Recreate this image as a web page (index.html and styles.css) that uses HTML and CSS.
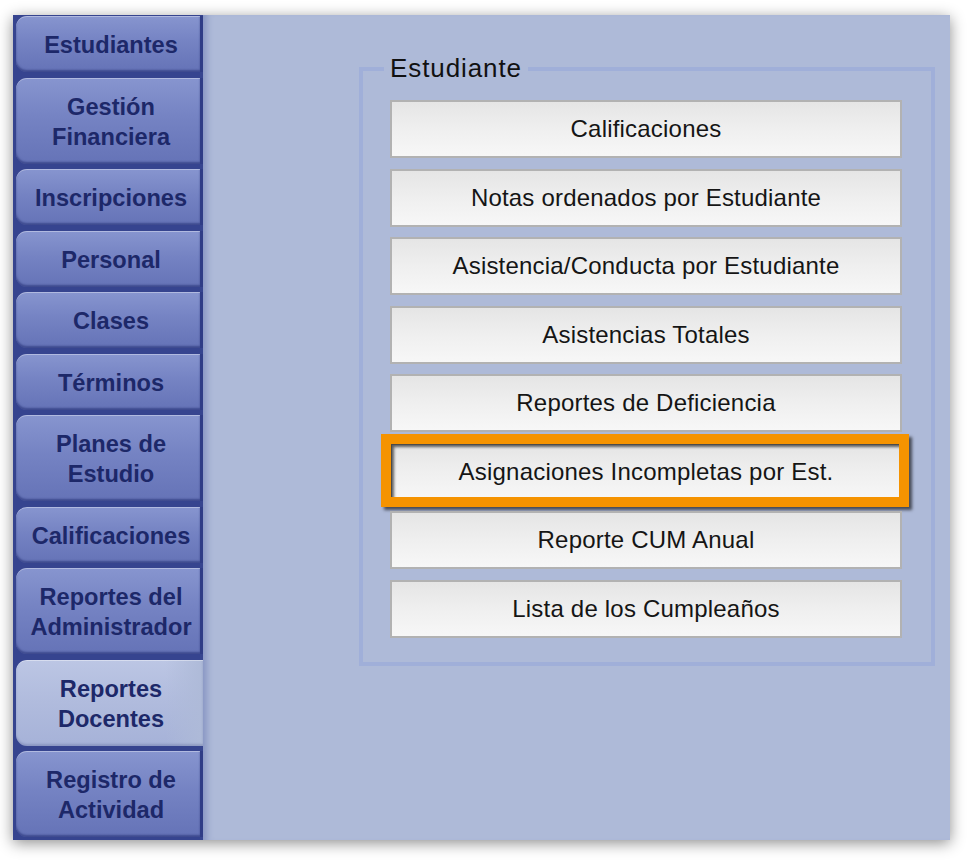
FILE: index.html
```html
<!DOCTYPE html>
<html lang="es">
<head>
<meta charset="utf-8">
<title>Reportes Docentes</title>
<link rel="stylesheet" href="styles.css">
</head>
<body>
<div class="frame">
  <nav class="sidebar">
    <div class="tab">Estudiantes</div>
    <div class="tab tall">Gestión<br>Financiera</div>
    <div class="tab">Inscripciones</div>
    <div class="tab">Personal</div>
    <div class="tab">Clases</div>
    <div class="tab">Términos</div>
    <div class="tab tall">Planes de<br>Estudio</div>
    <div class="tab">Calificaciones</div>
    <div class="tab tall">Reportes del<br>Administrador</div>
    <div class="tab tall selected">Reportes<br>Docentes</div>
    <div class="tab tall">Registro de<br>Actividad</div>
  </nav>
  <main class="content">
    <fieldset class="group">
      <legend class="group-title">Estudiante</legend>
      <div class="btn">Calificaciones</div>
      <div class="btn">Notas ordenados por Estudiante</div>
      <div class="btn">Asistencia/Conducta por Estudiante</div>
      <div class="btn">Asistencias Totales</div>
      <div class="btn">Reportes de Deficiencia</div>
      <div class="btn highlighted">Asignaciones Incompletas por Est.</div>
      <div class="btn">Reporte CUM Anual</div>
      <div class="btn">Lista de los Cumpleaños</div>
    </fieldset>
  </main>
</div>
</body>
</html>
```

FILE: styles.css
```css
html, body {
  margin: 0;
  padding: 0;
  background: #ffffff;
}

body {
  font-family: "Liberation Sans", Arial, sans-serif;
  width: 967px;
  height: 860px;
  overflow: hidden;
}

.frame {
  margin: 15px 0 0 13px;
  width: 937px;
  height: 825px;
  display: flex;
  box-shadow: 0 3px 14px rgba(0, 0, 0, 0.45);
}

.sidebar {
  width: 190px;
  flex: none;
  box-sizing: border-box;
  padding: 1px 0 0 3px;
  background: #36448f;
  display: flex;
  flex-direction: column;
  gap: 5.5px;
}

.tab {
  height: 56px;
  box-sizing: border-box;
  border-radius: 11px 0 0 11px;
  border-right: 3px solid #2f3c86;
  padding: 2px 0 0 6px;
  background: linear-gradient(#8795cf 0%, #7583c3 45%, #6573b7 100%);
  box-shadow: inset 0 1px 0 rgba(255, 255, 255, 0.35), inset 0 -2px 2px rgba(30, 40, 110, 0.55);
  color: #1d2869;
  font-weight: bold;
  font-size: 23.6px;
  line-height: 30px;
  text-align: center;
  display: flex;
  align-items: center;
  justify-content: center;
}

.tab.tall {
  height: 86px;
}

.tab.selected {
  border-right: none;
  padding-right: 3px;
  background: linear-gradient(90deg, rgba(174, 186, 216, 0) 80%, #aebad8 100%),
              linear-gradient(#bcc6e4 0%, #b0bbdd 50%, #a6b2d8 100%);
  box-shadow: inset 0 1px 0 rgba(255, 255, 255, 0.4), inset 0 -2px 2px rgba(60, 70, 130, 0.25);
}

.content {
  flex: 1;
  background: #aebad8;
  box-shadow: inset 9px 0 6px -5px rgba(70, 85, 160, 0.35);
  padding: 37px 0 0 156px;
}

.group {
  margin: 0;
  width: 576px;
  box-sizing: border-box;
  border: 4px solid #a0afd9;
  padding: 15px 29px 24px 27px;
  display: flex;
  flex-direction: column;
  gap: 10.5px;
}

.group-title {
  margin-left: -6px;
  padding: 0 6px;
  font-size: 26px;
  line-height: 33px;
  letter-spacing: 0.9px;
  color: #111111;
}

.btn {
  position: relative;
  height: 58px;
  box-sizing: border-box;
  border: 2px solid #b2b2b2;
  background: linear-gradient(#e5e5e5 0%, #efefef 50%, #f7f7f7 100%);
  color: #151515;
  font-size: 24px;
  letter-spacing: 0.2px;
  display: flex;
  align-items: center;
  justify-content: center;
}

.btn.highlighted::after {
  content: "";
  position: absolute;
  top: -11px;
  left: -11px;
  right: -9px;
  bottom: -8px;
  border: 10px solid #f59300;
  box-shadow: 3px 3px 3px rgba(0, 0, 0, 0.6), inset 3px 3px 3px rgba(0, 0, 0, 0.6);
}
```
